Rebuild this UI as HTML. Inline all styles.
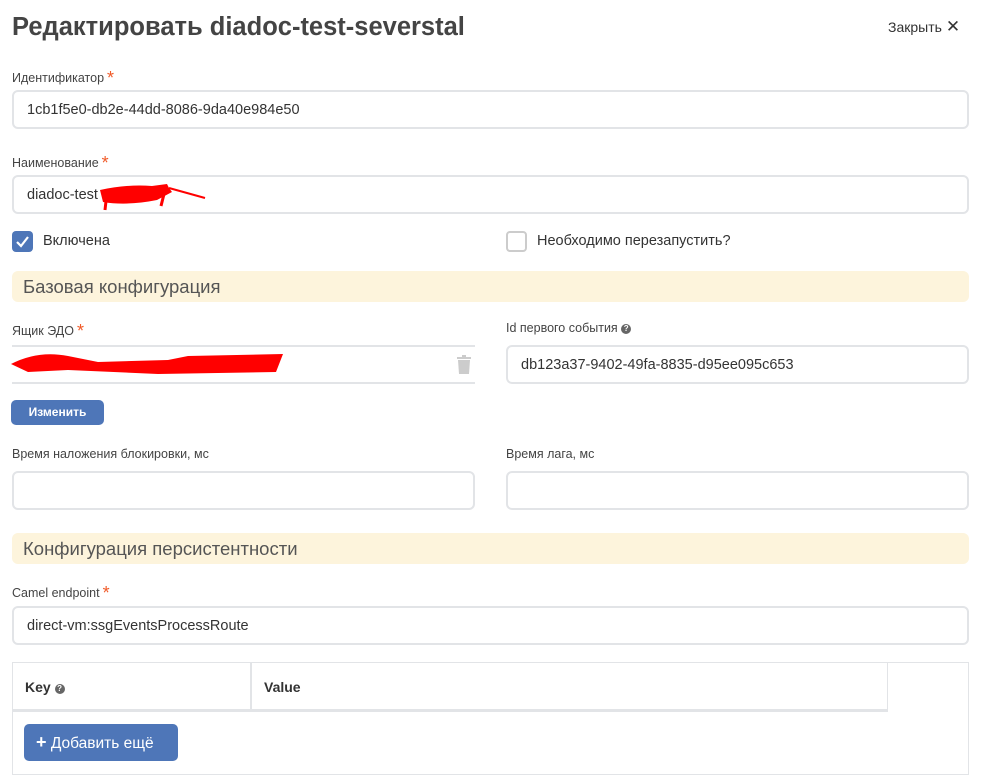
<!DOCTYPE html>
<html><head><meta charset="utf-8"><style>
*{box-sizing:border-box;margin:0;padding:0}
body{width:983px;height:782px;background:#fff;font-family:"Liberation Sans",sans-serif;color:#333;position:relative;overflow:hidden}
.a{position:absolute}
h1{position:absolute;left:12px;top:13px;font-size:25.5px;font-weight:bold;color:#444}
.lbl{position:absolute;font-size:12.5px;color:#444}
.lbl i{color:#f05a28;font-style:normal;font-size:18px;position:relative;top:2px;margin-left:3px}
.inp{position:absolute;height:39px;border:2px solid #e2e4e7;border-radius:6px;font-size:14.5px;color:#333;padding:10px 0 0 13px}
.sec{position:absolute;left:12px;width:957px;height:31px;background:#fdf4dc;border-radius:6px;font-size:18.5px;color:#555;padding:5px 0 0 11px}
.cb{position:absolute;width:21px;height:21px;border-radius:4px}
.btn{position:absolute;background:#4e76b8;color:#fff;border-radius:5px}
.q{display:inline-block;width:10px;height:10px;border-radius:50%;background:#666;color:#fff;font-size:8px;text-align:center;line-height:10px;font-weight:bold;vertical-align:1px}
</style></head><body>
<h1>Редактировать diadoc-test-severstal</h1>
<div class="a" style="left:888px;top:17px;font-size:14px;color:#333">Закрыть <span style="font-size:17px">✕</span></div>

<div class="lbl" style="left:12px;top:66px">Идентификатор<i>*</i></div>
<div class="inp" style="left:12px;top:90px;width:957px">1cb1f5e0-db2e-44dd-8086-9da40e984e50</div>

<div class="lbl" style="left:12px;top:151px">Наименование<i>*</i></div>
<div class="inp" style="left:12px;top:175px;width:957px">diadoc-test</div>
<svg class="a" style="left:97px;top:180px" width="115" height="35"><path d="M3 10 Q30 4 55 6 L70 4 L72 8 L75 12 L60 20 Q30 26 6 22 Z" fill="red"/><path d="M72 8 L108 18" stroke="red" stroke-width="2"/><path d="M8 30 L10 12 M64 26 L68 10" stroke="red" stroke-width="3"/></svg>

<div class="cb" style="left:12px;top:231px;background:#4e76b8"><svg width="21" height="21"><path d="M5 11 L9 15 L16 6" stroke="#fff" stroke-width="2.2" fill="none"/></svg></div>
<div class="a" style="left:43px;top:233px;font-size:14.5px">Включена</div>
<div class="cb" style="left:506px;top:231px;border:2px solid #ccc"></div>
<div class="a" style="left:537px;top:233px;font-size:14.5px">Необходимо перезапустить?</div>

<div class="sec" style="top:271px">Базовая конфигурация</div>

<div class="lbl" style="left:12px;top:319px">Ящик ЭДО<i>*</i></div>
<div class="a" style="left:12px;top:345px;width:463px;height:2px;background:#e2e4e7"></div>
<div class="a" style="left:12px;top:382px;width:463px;height:2px;background:#e2e4e7"></div>
<svg class="a" style="left:8px;top:350px" width="285" height="28"><path d="M3 14 Q30 0 60 6 L90 12 L160 10 L180 6 L275 4 L268 22 L150 24 L60 20 L20 22 Z" fill="red"/></svg>
<svg class="a" style="left:456px;top:355px" width="16" height="20"><rect x="1" y="2" width="14" height="2" fill="#ccc"/><rect x="6" y="0" width="4" height="2" fill="#ccc"/><path d="M2 5 H14 L13 19 H3 Z" fill="#ccc"/></svg>
<div class="btn" style="left:11px;top:400px;width:93px;height:25px;font-size:12px;font-weight:bold;text-align:center;line-height:25px">Изменить</div>

<div class="lbl" style="left:506px;top:321px">Id первого события <span class="q">?</span></div>
<div class="inp" style="left:506px;top:345px;width:463px">db123a37-9402-49fa-8835-d95ee095c653</div>

<div class="lbl" style="left:12px;top:447px">Время наложения блокировки, мс</div>
<div class="inp" style="left:12px;top:471px;width:463px"></div>
<div class="lbl" style="left:506px;top:447px">Время лага, мс</div>
<div class="inp" style="left:506px;top:471px;width:463px"></div>

<div class="sec" style="top:533px">Конфигурация персистентности</div>

<div class="lbl" style="left:12px;top:581px">Camel endpoint<i>*</i></div>
<div class="inp" style="left:12px;top:606px;width:957px">direct-vm:ssgEventsProcessRoute</div>

<div class="a" style="left:12px;top:662px;width:957px;height:113px;border:1px solid #e2e4e7"></div>
<div class="a" style="left:12px;top:709px;width:876px;height:3px;background:#e2e4e7"></div>
<div class="a" style="left:250px;top:663px;width:2px;height:46px;background:#e2e4e7"></div>
<div class="a" style="left:887px;top:663px;width:1px;height:48px;background:#e2e4e7"></div>
<div class="a" style="left:25px;top:679px;font-size:14px;font-weight:bold">Key <span class="q">?</span></div>
<div class="a" style="left:264px;top:679px;font-size:14px;font-weight:bold">Value</div>
<div class="btn" style="left:24px;top:724px;width:154px;height:37px;font-size:15.5px;line-height:37px;padding-left:12px"><b style="font-size:18px">+</b> Добавить ещё</div>
</body></html>
